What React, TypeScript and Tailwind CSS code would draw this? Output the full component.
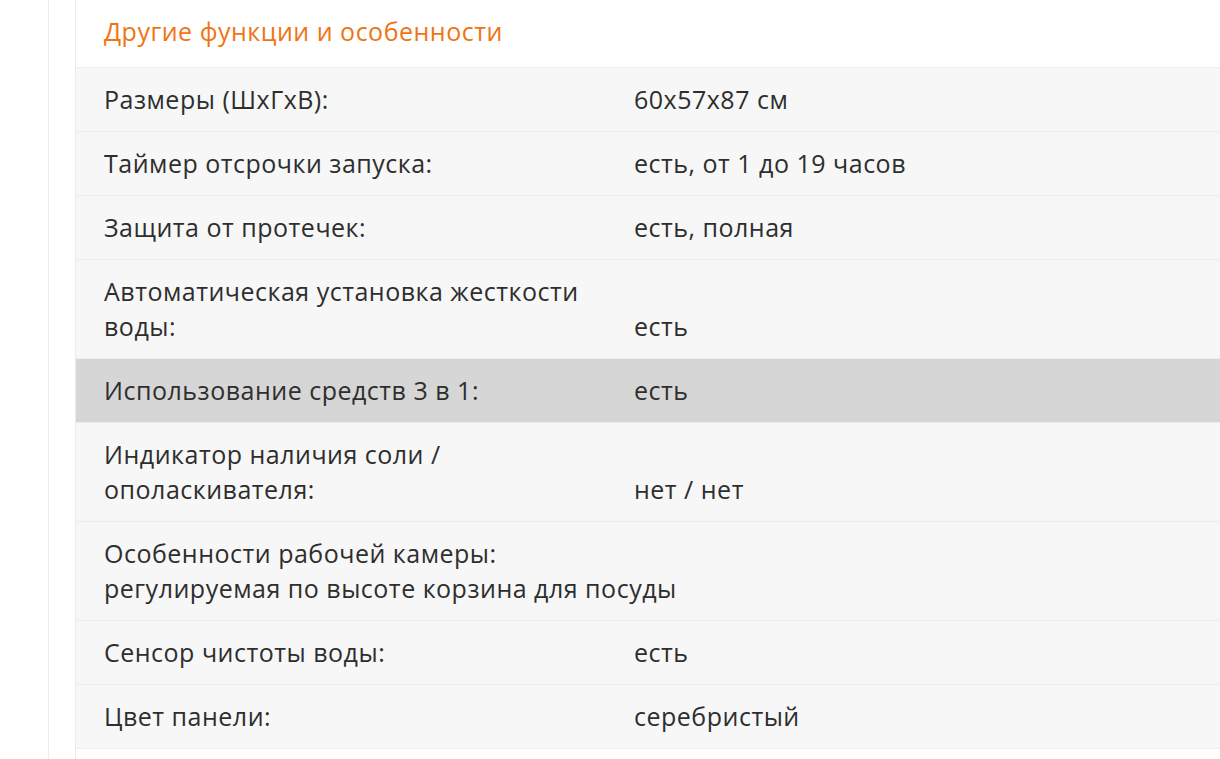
const rows: { label: string; value?: string; active?: boolean; full?: boolean }[] = [
  { label: "Размеры (ШхГхВ):", value: "60x57x87 см" },
  { label: "Таймер отсрочки запуска:", value: "есть, от 1 до 19 часов" },
  { label: "Защита от протечек:", value: "есть, полная" },
  { label: "Автоматическая установка жесткости воды:", value: "есть" },
  { label: "Использование средств 3 в 1:", value: "есть", active: true },
  { label: "Индикатор наличия соли / ополаскивателя:", value: "нет / нет" },
  { label: "Особенности рабочей камеры:", value: "регулируемая по высоте корзина для посуды", full: true },
  { label: "Сенсор чистоты воды:", value: "есть" },
  { label: "Цвет панели:", value: "серебристый" },
];

export default function App() {
  return (
    <div
      className="flex h-[759px] w-[1220px] overflow-hidden bg-white text-[25px] leading-[35px] tracking-[0.02em] text-[#2e2e2e]"
      style={{ fontFamily: '"Open Sans", "Noto Sans", sans-serif' }}
    >
      <div className="w-[48px] shrink-0" />
      <div className="w-[27px] shrink-0 border-l border-[#ececec]" />
      <div className="flex flex-1 flex-col border-l border-[#ececec]">
        <div className="border-b border-[#ececec] px-[28px] pt-[14px] pb-[18px] font-medium text-[#ef7414]">
          Другие функции и особенности
        </div>
        {rows.map((row) =>
          row.full ? (
            <div key={row.label} className="border-b border-[#ececec] bg-[#f7f7f7] px-[28px] py-[14px]">
              <div>{row.label}</div>
              <div>{row.value}</div>
            </div>
          ) : (
            <div
              key={row.label}
              className={`flex items-end border-b border-[#ececec] py-[14px] ${row.active ? "bg-[#d6d6d6]" : "bg-[#f7f7f7]"}`}
            >
              <div className="w-[530px] shrink-0 pl-[28px] pr-[18px]">{row.label}</div>
              <div className="px-[28px]">{row.value}</div>
            </div>
          )
        )}
        <div className="flex-1 bg-white" />
      </div>
    </div>
  );
}
